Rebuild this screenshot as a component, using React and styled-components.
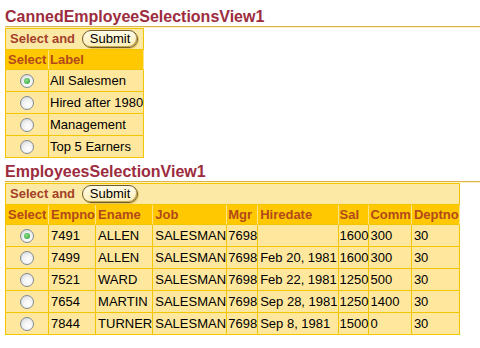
import React from "react";
import styled, { createGlobalStyle } from "styled-components";

const GlobalStyle = createGlobalStyle`
  html, body {
    margin: 0;
    padding: 0;
    background: #ffffff;
  }
  body {
    font-family: "Liberation Sans", Arial, sans-serif;
    font-size: 13px;
    color: #000000;
  }
`;

const Page = styled.div`
  width: 480px;
  height: 348px;
  overflow: hidden;
  padding-left: 5px;
  box-sizing: border-box;
`;

const Title = styled.h2`
  margin: ${({ first }) => (first ? "6px" : "3px")} 0 0 0;
  padding-top: 1px;
  height: 19px;
  line-height: 19px;
  font-size: 16px;
  font-weight: bold;
  color: #9c2c3e;
  border-bottom: 1px solid #d8b24a;
  box-shadow: 0 1px 0 #fff3c4;
  margin-bottom: 1px;
  white-space: nowrap;
`;

const Table = styled.table`
  border-collapse: separate;
  border-spacing: 0;
  table-layout: fixed;
  border-top: 1px solid #f3c600;
  border-left: 1px solid #f3c600;
  margin-top: 1px;
`;

const ActionCell = styled.td`
  background: #fde9a6;
  border-right: 1px solid #f3c600;
  border-bottom: 1px solid #f3c600;
  height: 20px;
  padding: 0 0 0 4px;
  white-space: nowrap;
  box-sizing: border-box;
`;

const ActionInner = styled.div`
  display: flex;
  align-items: center;
  height: 20px;
  gap: 7px;
`;

const ActionLabel = styled.span`
  font-weight: bold;
  color: #a3402a;
  line-height: 20px;
`;

const SubmitButton = styled.button`
  font-family: "Liberation Sans", Arial, sans-serif;
  font-size: 13px;
  color: #000000;
  height: 18px;
  width: 56px;
  padding: 0;
  line-height: 16px;
  border: 1px solid #6d5b2c;
  border-radius: 9px;
  background: linear-gradient(#fffbe8, #fdeeb8);
  box-shadow: inset -1px -1px 0 #c9a950, 1px 1px 0 #e8c860;
  cursor: pointer;
`;

const HeadCell = styled.th`
  background: #ffc800;
  color: #b3481b;
  font-weight: bold;
  text-align: left;
  height: 20px;
  line-height: 19px;
  padding: 0 0 0 ${({ pad }) => (pad !== undefined ? pad : 2)}px;
  border-right: 1px solid #fbe38a;
  border-bottom: 1px solid #f3c600;
  white-space: nowrap;
  overflow: visible;
  box-sizing: border-box;
`;

const Cell = styled.td`
  background: #ffe79e;
  height: 22px;
  line-height: 21px;
  padding: 0 0 0 ${({ pad }) => (pad !== undefined ? pad : 2)}px;
  border-right: 1px solid #f3c600;
  border-bottom: 1px solid #f3c600;
  white-space: nowrap;
  overflow: visible;
  box-sizing: border-box;
`;

const RadioCell = styled(Cell)`
  padding: 0;
  text-align: center;
`;

const Radio = styled.span`
  display: inline-block;
  vertical-align: middle;
  width: 12px;
  height: 12px;
  border-radius: 50%;
  border: 1px solid #7f8a94;
  background: radial-gradient(circle at 60% 65%, #ffffff 0%, #f2f2f2 45%, #c9ced4 100%);
  position: relative;
  margin-top: -2px;
  &::after {
    content: "";
    display: ${({ checked }) => (checked ? "block" : "none")};
    position: absolute;
    left: 3px;
    top: 3px;
    width: 6px;
    height: 6px;
    border-radius: 50%;
    background: radial-gradient(circle at 40% 40%, #8fe08f, #1f9a2a);
  }
`;

const canned = ["All Salesmen", "Hired after 1980", "Management", "Top 5 Earners"];

const columns = [
  { key: "empno", label: "Empno", width: 46 },
  { key: "ename", label: "Ename", width: 55 },
  { key: "job", label: "Job", width: 74 },
  { key: "mgr", label: "Mgr", width: 29, pad: 1 },
  { key: "hiredate", label: "Hiredate", width: 80 },
  { key: "sal", label: "Sal", width: 30, pad: 1 },
  { key: "comm", label: "Comm", width: 42, pad: 1 },
  { key: "deptno", label: "Deptno", width: 47 },
];

const employees = [
  { empno: "7491", ename: "ALLEN", job: "SALESMAN", mgr: "7698", hiredate: "", sal: "1600", comm: "300", deptno: "30" },
  { empno: "7499", ename: "ALLEN", job: "SALESMAN", mgr: "7698", hiredate: "Feb 20, 1981", sal: "1600", comm: "300", deptno: "30" },
  { empno: "7521", ename: "WARD", job: "SALESMAN", mgr: "7698", hiredate: "Feb 22, 1981", sal: "1250", comm: "500", deptno: "30" },
  { empno: "7654", ename: "MARTIN", job: "SALESMAN", mgr: "7698", hiredate: "Sep 28, 1981", sal: "1250", comm: "1400", deptno: "30" },
  { empno: "7844", ename: "TURNER", job: "SALESMAN", mgr: "7698", hiredate: "Sep 8, 1981", sal: "1500", comm: "0", deptno: "30" },
];

const ActionRow = ({ span }) => (
  <tr>
    <ActionCell colSpan={span}>
      <ActionInner>
        <ActionLabel>Select and</ActionLabel>
        <SubmitButton type="button">Submit</SubmitButton>
      </ActionInner>
    </ActionCell>
  </tr>
);

const App = () => (
  <>
    <GlobalStyle />
    <Page>
      <Title first>CannedEmployeeSelectionsView1</Title>
      <Table>
        <colgroup>
          <col style={{ width: 43 }} />
          <col style={{ width: 95 }} />
        </colgroup>
        <tbody>
          <ActionRow span={2} />
          <tr>
            <HeadCell>Select</HeadCell>
            <HeadCell pad={1}>Label</HeadCell>
          </tr>
          {canned.map((label, i) => (
            <tr key={label}>
              <RadioCell>
                <Radio checked={i === 0} />
              </RadioCell>
              <Cell pad={1}>{label}</Cell>
            </tr>
          ))}
        </tbody>
      </Table>

      <Title>EmployeesSelectionView1</Title>
      <Table>
        <colgroup>
          <col style={{ width: 43 }} />
          {columns.map((c) => (
            <col key={c.key} style={{ width: c.width }} />
          ))}
        </colgroup>
        <tbody>
          <ActionRow span={columns.length + 1} />
          <tr>
            <HeadCell>Select</HeadCell>
            {columns.map((c) => (
              <HeadCell key={c.key} pad={c.pad}>
                {c.label}
              </HeadCell>
            ))}
          </tr>
          {employees.map((emp, i) => (
            <tr key={emp.empno}>
              <RadioCell>
                <Radio checked={i === 0} />
              </RadioCell>
              {columns.map((c) => (
                <Cell key={c.key} pad={c.pad}>
                  {emp[c.key]}
                </Cell>
              ))}
            </tr>
          ))}
        </tbody>
      </Table>
    </Page>
  </>
);

export default App;
